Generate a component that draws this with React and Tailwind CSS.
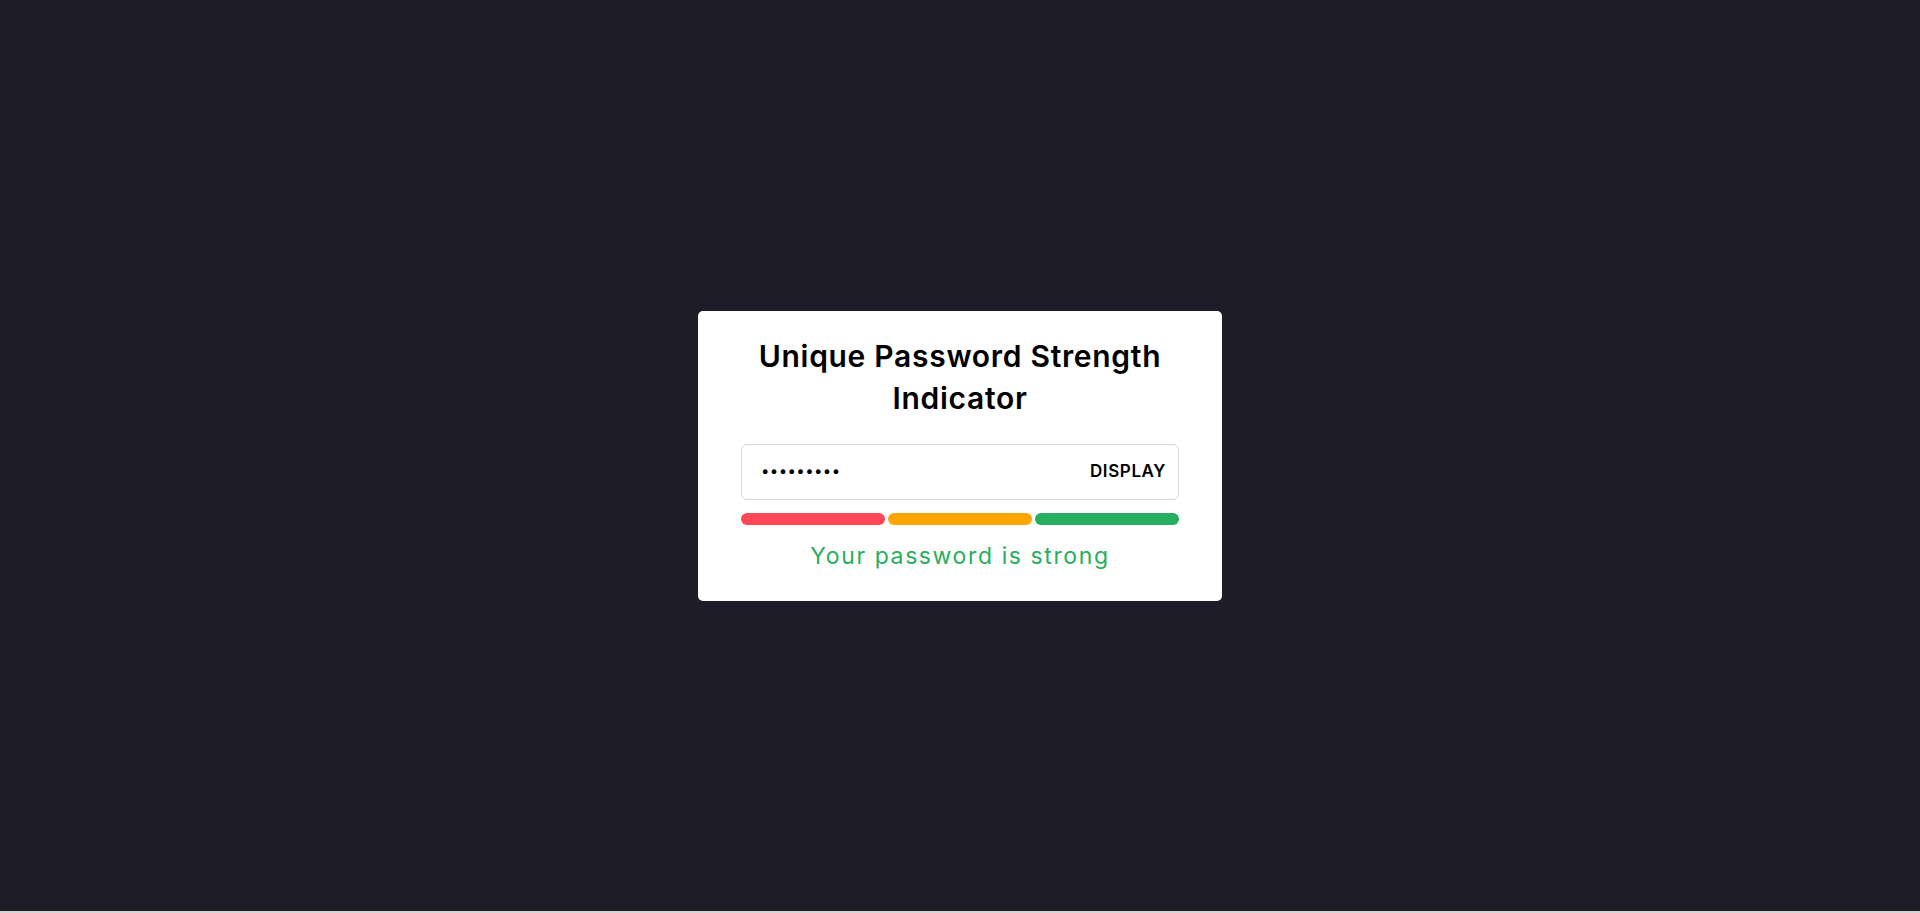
import React, { useState } from "react";

const App = () => {
  const [password, setPassword] = useState("Str0ng!Pw");
  const [show, setShow] = useState(false);

  return (
    <div className="flex flex-col" style={{ fontFamily: "Inter, 'Noto Sans', sans-serif" }}>
      <div className="h-[911px] bg-[#1e1c26] flex items-center justify-center">
        <div className="w-[524px] bg-white rounded-[5px] px-[43px] pt-[24px] pb-[27px] flex flex-col items-center">
          <h1 className="text-[30px] leading-[42px] font-semibold text-black text-center tracking-[0.7px]">
            Unique Password Strength Indicator
          </h1>

          <div className="mt-[25px] w-full h-[56px] flex items-center border border-[#d6d6d6] rounded-[6px] pl-[19px] pr-[12px]">
            <input
              type={show ? "text" : "password"}
              value={password}
              onChange={(e) => setPassword(e.target.value)}
              className="flex-1 min-w-0 outline-none text-[15px] tracking-[0.4px] text-black bg-transparent"
            />
            <button
              onClick={() => setShow(!show)}
              className="text-[17px] font-semibold text-black uppercase tracking-[0.6px] cursor-pointer"
            >
              Display
            </button>
          </div>

          <div className="mt-[13px] w-full grid grid-cols-3 gap-[3px]">
            <div className="h-[12px] rounded-full bg-[#ff4757]"></div>
            <div className="h-[12px] rounded-full bg-[#ffa502]"></div>
            <div className="h-[12px] rounded-full bg-[#27ae60]"></div>
          </div>

          <p className="mt-[13px] text-[23px] leading-[36px] tracking-[1.6px] text-[#27ae60]">
            Your password is strong
          </p>
        </div>
      </div>
      <div className="h-[2px] bg-[#d4d4d4]"></div>
    </div>
  );
};

export default App;
